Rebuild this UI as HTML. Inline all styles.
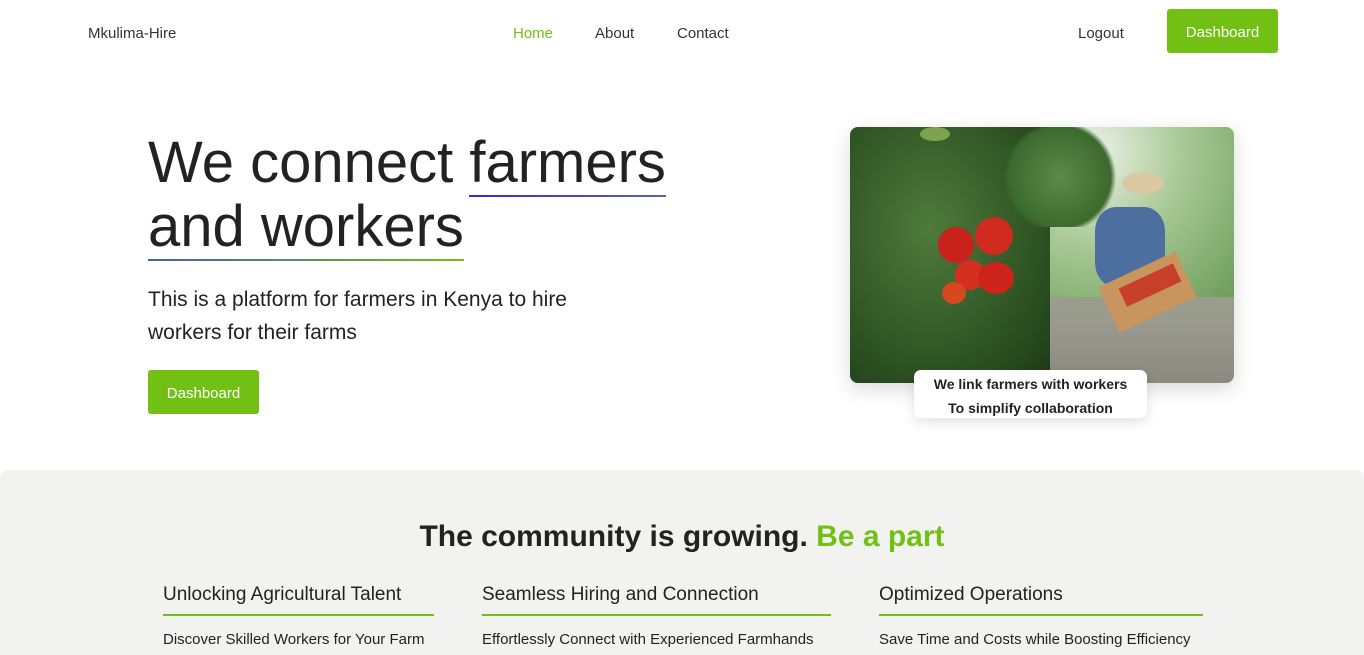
<!DOCTYPE html>
<html><head><meta charset="utf-8"><style>
*{margin:0;padding:0;box-sizing:border-box}
body{width:1364px;height:655px;overflow:hidden;background:#fff;font-family:"Liberation Sans",sans-serif;color:#222;position:relative}
.a{position:absolute;white-space:nowrap}
.nav{font-size:15px;color:#333}
.btn{background:#73c014;color:#fff;border-radius:3px;font-size:15px;display:flex;align-items:center;justify-content:center;padding-top:2px}
h1{font-weight:400;font-size:58px;line-height:64px;color:#222}
.u1{border-bottom:2px solid;border-image:linear-gradient(90deg,#2b2bf0,#5566aa) 1}
.u2{border-bottom:2px solid;border-image:linear-gradient(90deg,#4a5fa0,#73c014) 1}
.sec{position:absolute;left:0;top:470px;width:1364px;height:185px;background:#f2f2f0;border-radius:8px 8px 0 0}
.ft{font-size:19px;color:#222}
.ln{height:2px;background:#73c014}
.fd{font-size:15px;color:#222}
</style></head><body>
<div class="a nav" style="left:88px;top:25px">Mkulima-Hire</div>
<div class="a nav" style="left:513px;top:25px;color:#73c014">Home</div>
<div class="a nav" style="left:595px;top:25px">About</div>
<div class="a nav" style="left:677px;top:25px">Contact</div>
<div class="a nav" style="left:1078px;top:25px">Logout</div>
<div class="a btn" style="left:1167px;top:9px;width:111px;height:44px">Dashboard</div>

<div class="a" style="left:148px;top:131px"><h1>We connect <span class="u1">farmers</span><br><span class="u2">and workers</span></h1></div>
<div class="a" style="left:148px;top:283px;font-size:21px;line-height:33px;color:#222">This is a platform for farmers in Kenya to hire<br>workers for their farms</div>
<div class="a btn" style="left:148px;top:370px;width:111px;height:44px">Dashboard</div>

<div class="a" style="left:850px;top:127px;width:384px;height:256px;border-radius:8px;overflow:hidden;box-shadow:0 6px 20px rgba(0,0,0,.15);background:linear-gradient(180deg,#a9c996 0%,#8fae7c 40%,#9a9a8e 75%,#8a8a80 100%)">
 <div class="a" style="left:180px;top:0;width:204px;height:170px;background:radial-gradient(ellipse at 30% 15%,#eef2ea 0%,#a9c996 45%,#6d9c5c 100%)"></div>
 <div class="a" style="left:0;top:0;width:200px;height:256px;background:radial-gradient(ellipse at 40% 40%,#4f7a3c 0%,#2f5524 60%,#1e3a18 100%)"></div>
 <div class="a" style="left:150px;top:0;width:120px;height:100px;background:radial-gradient(circle,#5d8a4a,#3c6a2e 65%,transparent 72%)"></div>
 <div class="a" style="left:245px;top:80px;width:70px;height:80px;border-radius:30%;background:#4d6fa0"></div>
 <div class="a" style="left:272px;top:45px;width:42px;height:22px;border-radius:50%;background:#dac9a2"></div>
 <div class="a" style="left:255px;top:140px;width:85px;height:50px;background:#c9955f;transform:rotate(-25deg)"></div>
 <div class="a" style="left:270px;top:148px;width:60px;height:20px;background:#c8402c;transform:rotate(-25deg)"></div>
 <div class="a" style="left:88px;top:100px;width:36px;height:36px;border-radius:50%;background:#c8221a"></div>
 <div class="a" style="left:125px;top:90px;width:38px;height:38px;border-radius:50%;background:#d12a1e"></div>
 <div class="a" style="left:105px;top:133px;width:30px;height:30px;border-radius:50%;background:#d5301f"></div>
 <div class="a" style="left:128px;top:135px;width:36px;height:32px;border-radius:50%;background:#cc241b"></div>
 <div class="a" style="left:92px;top:155px;width:24px;height:22px;border-radius:50%;background:#d6481f"></div>
 <div class="a" style="left:70px;top:0;width:30px;height:14px;border-radius:50%;background:#7ca44e"></div>
</div>
<div class="a" style="left:914px;top:370px;width:233px;height:48px;background:#fff;border-radius:7px;box-shadow:0 4px 12px rgba(0,0,0,.12);text-align:center;font-size:14px;line-height:24px;font-weight:bold;color:#222;padding-top:2px">We link farmers with workers<br>To simplify collaboration</div>

<div class="sec"></div>
<div class="a" style="left:0;top:520px;width:1364px;text-align:center;font-size:30px;font-weight:bold;color:#222">The community is growing. <span style="color:#73c014">Be a part</span></div>
<div class="a ft" style="left:163px;top:584px">Unlocking Agricultural Talent</div>
<div class="a ln" style="left:163px;top:614px;width:271px"></div>
<div class="a fd" style="left:163px;top:631px">Discover Skilled Workers for Your Farm</div>
<div class="a ft" style="left:482px;top:584px">Seamless Hiring and Connection</div>
<div class="a ln" style="left:482px;top:614px;width:349px"></div>
<div class="a fd" style="left:482px;top:631px">Effortlessly Connect with Experienced Farmhands</div>
<div class="a ft" style="left:879px;top:584px">Optimized Operations</div>
<div class="a ln" style="left:879px;top:614px;width:324px"></div>
<div class="a fd" style="left:879px;top:631px">Save Time and Costs while Boosting Efficiency</div>
</body></html>
